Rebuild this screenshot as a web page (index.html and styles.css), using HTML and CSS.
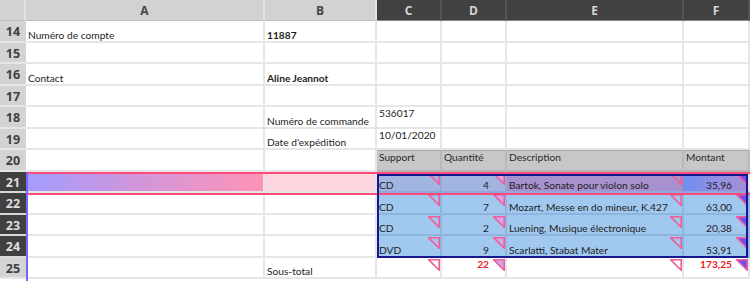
FILE: index.html
```html
<!DOCTYPE html>
<html lang="fr">
<head>
<meta charset="utf-8">
<title>Feuille</title>
<link rel="stylesheet" href="styles.css">
</head>
<body>
<div class="sheet">
  <div class="corner"></div>
  <div class="ch">A</div>
  <div class="ch">B</div>
  <div class="ch dk">C</div>
  <div class="ch dk">D</div>
  <div class="ch dk">E</div>
  <div class="ch dk">F</div>

  <div class="rh">14</div>
  <div class="c">Numéro de compte</div>
  <div class="c b">11887</div>
  <div class="c"></div><div class="c"></div><div class="c"></div><div class="c"></div>

  <div class="rh">15</div>
  <div class="c"></div><div class="c"></div><div class="c"></div><div class="c"></div><div class="c"></div><div class="c"></div>

  <div class="rh">16</div>
  <div class="c">Contact</div>
  <div class="c b">Aline Jeannot</div>
  <div class="c"></div><div class="c"></div><div class="c"></div><div class="c"></div>

  <div class="rh">17</div>
  <div class="c"></div><div class="c"></div><div class="c"></div><div class="c"></div><div class="c"></div><div class="c"></div>

  <div class="rh">18</div>
  <div class="c"></div>
  <div class="c">Numéro de commande</div>
  <div class="c top">536017</div>
  <div class="c"></div><div class="c"></div><div class="c"></div>

  <div class="rh">19</div>
  <div class="c"></div>
  <div class="c">Date d'expédition</div>
  <div class="c top">10/01/2020</div>
  <div class="c"></div><div class="c"></div><div class="c"></div>

  <div class="rh">20</div>
  <div class="c"></div>
  <div class="c"></div>
  <div class="c top hd">Support</div>
  <div class="c top hd">Quantité</div>
  <div class="c top hd">Description</div>
  <div class="c top hd">Montant</div>

  <div class="rh dk">21</div>
  <div class="c a21"></div>
  <div class="c b21"></div>
  <div class="c s21">CD<svg class="tri tc" viewBox="0 0 12 12"><path d="M0.8 0.8H11.2V11.2Z"/></svg></div>
  <div class="c s21 num">4<svg class="tri td" viewBox="0 0 12 12"><path d="M0.8 0.8H11.2V11.2Z"/></svg></div>
  <div class="c e21">Bartok, Sonate pour violon solo<svg class="tri tc" viewBox="0 0 12 12"><path d="M0.8 0.8H11.2V11.2Z"/></svg></div>
  <div class="c f21 num">35,96<svg class="tri tf" viewBox="0 0 12 12"><path d="M0.8 0.8H11.2V11.2Z"/></svg></div>

  <div class="rh dk">22</div>
  <div class="c"></div>
  <div class="c"></div>
  <div class="c bl">CD<svg class="tri tc" viewBox="0 0 12 12"><path d="M0.8 0.8H11.2V11.2Z"/></svg></div>
  <div class="c bl num">7<svg class="tri td" viewBox="0 0 12 12"><path d="M0.8 0.8H11.2V11.2Z"/></svg></div>
  <div class="c bl">Mozart, Messe en do mineur, K.427<svg class="tri tc" viewBox="0 0 12 12"><path d="M0.8 0.8H11.2V11.2Z"/></svg></div>
  <div class="c bl num">63,00<svg class="tri tf" viewBox="0 0 12 12"><path d="M0.8 0.8H11.2V11.2Z"/></svg></div>

  <div class="rh dk">23</div>
  <div class="c"></div>
  <div class="c"></div>
  <div class="c bl">CD<svg class="tri tc" viewBox="0 0 12 12"><path d="M0.8 0.8H11.2V11.2Z"/></svg></div>
  <div class="c bl num">2<svg class="tri td" viewBox="0 0 12 12"><path d="M0.8 0.8H11.2V11.2Z"/></svg></div>
  <div class="c bl">Luening, Musique électronique<svg class="tri tc" viewBox="0 0 12 12"><path d="M0.8 0.8H11.2V11.2Z"/></svg></div>
  <div class="c bl num">20,38<svg class="tri tf" viewBox="0 0 12 12"><path d="M0.8 0.8H11.2V11.2Z"/></svg></div>

  <div class="rh dk">24</div>
  <div class="c"></div>
  <div class="c"></div>
  <div class="c bl">DVD<svg class="tri tc" viewBox="0 0 12 12"><path d="M0.8 0.8H11.2V11.2Z"/></svg></div>
  <div class="c bl num">9<svg class="tri td" viewBox="0 0 12 12"><path d="M0.8 0.8H11.2V11.2Z"/></svg></div>
  <div class="c bl">Scarlatti, Stabat Mater<svg class="tri tc" viewBox="0 0 12 12"><path d="M0.8 0.8H11.2V11.2Z"/></svg></div>
  <div class="c bl num">53,91<svg class="tri tf" viewBox="0 0 12 12"><path d="M0.8 0.8H11.2V11.2Z"/></svg></div>

  <div class="rh">25</div>
  <div class="c"></div>
  <div class="c">Sous-total</div>
  <div class="c"><svg class="tri tc" viewBox="0 0 12 12"><path d="M0.8 0.8H11.2V11.2Z"/></svg></div>
  <div class="c top num red">22<svg class="tri td" viewBox="0 0 12 12"><path d="M0.8 0.8H11.2V11.2Z"/></svg></div>
  <div class="c"><svg class="tri tc" viewBox="0 0 12 12"><path d="M0.8 0.8H11.2V11.2Z"/></svg></div>
  <div class="c top num red">173,25<svg class="tri tf" viewBox="0 0 12 12"><path d="M0.8 0.8H11.2V11.2Z"/></svg></div>

  <div class="band"></div>
  <div class="sel"></div>
  <div class="edge"></div>
</div>
</body>
</html>
```
FILE: styles.css
```css
* { box-sizing: border-box; }
html, body { margin: 0; padding: 0; background: #ffffff; }
body { width: 750px; height: 281px; overflow: hidden; }

.sheet {
  position: relative;
  display: grid;
  grid-template-columns: 26px 239px 112px 65px 65px 177px 66px;
  grid-template-rows: 21px 22px 21px 22px 21px 22px 21px 22px 21px 22px 21px 22px 21px;
  width: 750px;
  font-family: "Lato", "Liberation Sans", sans-serif;
  font-size: 10.2px;
  color: #1e1e1e;
}

.corner { background: #d2d2d2; border-right: 2px solid #e2e2e2; border-bottom: 1px solid #bdbdbd; }

.ch {
  display: flex;
  align-items: center;
  justify-content: center;
  background: #d2d2d2;
  color: #454545;
  font-family: "Open Sans", "DejaVu Sans", sans-serif;
  font-weight: 700;
  font-size: 12px;
  border-right: 2px solid #e2e2e2;
  border-bottom: 1px solid #bdbdbd;
}
.ch.dk { background: #414141; color: #d4d4d4; border-right-color: #555555; border-bottom-color: #8a8a8a; }

.rh {
  display: flex;
  align-items: center;
  justify-content: center;
  background: #d3d3d3;
  color: #404040;
  font-family: "Open Sans", "DejaVu Sans", sans-serif;
  font-weight: 700;
  font-size: 12.5px;
  border-bottom: 2px solid #e6e6e6;
  padding-top: 1px;
}
.rh.dk { background: #404040; color: #dedede; border-bottom-color: #d8d8d8; }

.c {
  position: relative;
  display: flex;
  align-items: flex-end;
  padding: 0 3px 0 2px;
  border-right: 2px solid #e6e6e6;
  border-bottom: 2px solid #e6e6e6;
  white-space: nowrap;
  line-height: 11px;
}
.c.top { align-items: flex-start; padding-top: 1px; padding-bottom: 0; }
.c.b { font-weight: 700; }
.c.num { justify-content: flex-end; padding-right: 16px; }
.c.red { color: #f01818; font-weight: 700; }
.c.hd { background: #c7c7c7; border-right-color: #b9b9b9; border-bottom-color: #b4b4b4; color: #2a2a2a; box-shadow: inset 0 1px 0 #a8a8a8; padding-top: 2px; }

.a21 { background: linear-gradient(90deg, #a29cff 0%, #cf96dc 45%, #ff93b6 100%); }
.b21 { background: #ffd6e0; }
.s21 { background: #a2b5e1; border-right-color: #95a9d9; border-bottom-color: #8fa7db; }
.e21 { background: #a891cf; border-right-color: #9b8acb; border-bottom-color: #8fa7db; }
.f21 { background: linear-gradient(90deg, #6f8ff3 0%, #8d8fe2 45%, #a690d4 100%); border-bottom-color: #8fa7db; }
.bl { background: #a1c8ef; border-right-color: #8db5de; border-bottom-color: #8db5de; }

.tri {
  position: absolute;
  top: 1px;
  right: 0;
  width: 12px;
  height: 12px;
  stroke: #f25d97;
  stroke-width: 1.6;
  stroke-linejoin: miter;
}
.tri.tc { fill: none; }
.tri.td { fill: #cfa9ee; }
.tri.tf { fill: #6b4ff0; }

.band {
  position: absolute;
  left: 26px;
  top: 172px;
  width: 724px;
  height: 23px;
  border-top: 2px solid #ff4b79;
  border-bottom: 2px solid #ff4b79;
  pointer-events: none;
}
.sel {
  position: absolute;
  left: 377px;
  top: 174px;
  width: 371px;
  height: 84px;
  border: 2px solid #16168e;
  pointer-events: none;
}
.edge {
  position: absolute;
  left: 26px;
  top: 172px;
  width: 2px;
  height: 109px;
  background: #7764ff;
  pointer-events: none;
}
```
